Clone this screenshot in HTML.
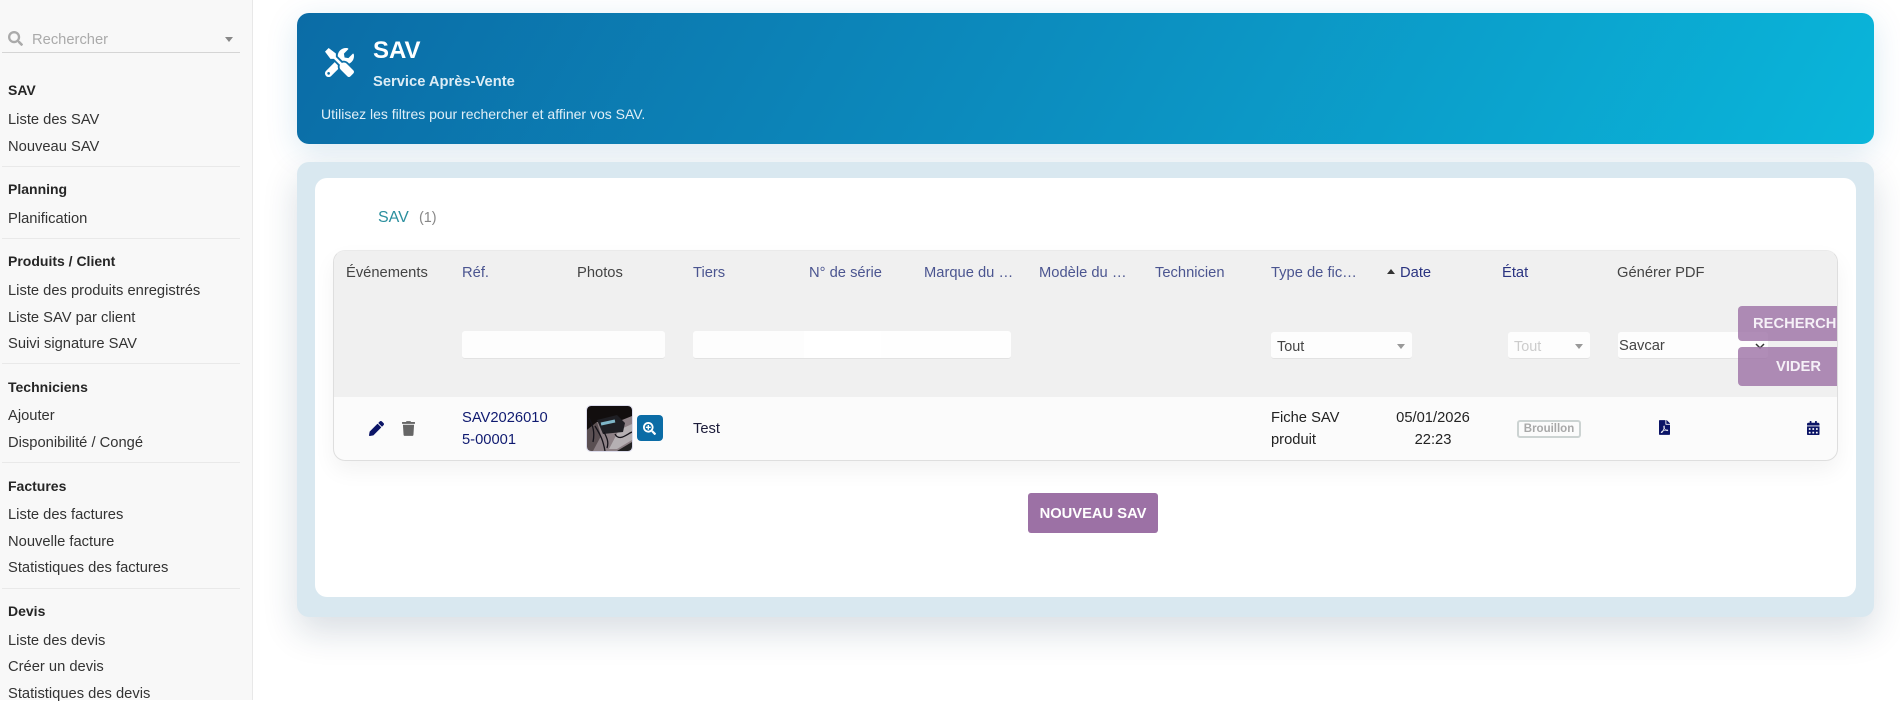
<!DOCTYPE html>
<html lang="fr"><head><meta charset="utf-8"><title>SAV</title>
<style>
*{box-sizing:border-box}
html,body{margin:0;padding:0;width:1900px;height:700px;overflow:hidden;background:#fff;font-family:"Liberation Sans",sans-serif;font-size:14.72px}
.a{position:absolute;white-space:nowrap;line-height:20px}
svg{position:absolute;display:block}
#side{position:absolute;left:0;top:0;width:253px;height:700px;background:#f8f8f8;border-right:1px solid #e8e8e8}
.h{font-weight:700;color:#262626;left:8px;font-size:14px}
.l{color:#333;left:8px}
.hr{position:absolute;left:2px;width:238px;height:1px;background:#e9e9e9}
#hero{position:absolute;left:297px;top:13px;width:1577px;height:131px;border-radius:12px;background:linear-gradient(120deg,#0b6ca6 0%,#0c8fc0 50%,#0ab6da 100%);box-shadow:0 8px 32px rgba(11,108,166,.15)}
#outer{position:absolute;left:297px;top:162px;width:1577px;height:455px;border-radius:12px;background:#d9e8f0;box-shadow:0 15px 35px rgba(20,50,80,.16)}
#inner{position:absolute;left:315px;top:178px;width:1541px;height:419px;border-radius:12px;background:#fff}
#tbl{position:absolute;left:333px;top:250px;width:1505px;height:211px;border-radius:12px;border:1px solid #dedede;border-top-color:#eaeaea;background:#fbfbfb;overflow:hidden}
#tshadow{position:absolute;left:333px;top:250px;width:1505px;height:211px;border-radius:12px;box-shadow:0 10px 22px rgba(0,0,0,.05)}
#thead{position:absolute;left:0;top:0;width:1505px;height:146px;background:#f0f0f0}
.th{top:263px;color:#4b5590}
.inp{position:absolute;background:#fdfdfd;border-bottom:1px solid #e2e2e2;border-radius:3px}
.car{position:absolute;width:0;height:0;border-left:4px solid transparent;border-right:4px solid transparent;border-top:5px solid #999}
.btn{position:absolute;left:1738px;width:99px;background:rgba(156,113,165,.8);border-radius:4px 0 0 4px;color:#f5f0f7;font-weight:700;overflow:hidden;white-space:nowrap}
.td{color:#1c1c3a}
</style></head><body>

<div id="side">
<svg style="left:8px;top:31px" width="15" height="15" viewBox="0 0 512 512"><path fill="#aaa" d="M505 442.7L405.3 343c-4.5-4.5-10.6-7-17-7H372c27.6-35.3 44-79.7 44-128C416 93.1 322.9 0 208 0S0 93.1 0 208s93.1 208 208 208c48.3 0 92.7-16.4 128-44v16.3c0 6.4 2.5 12.5 7 17l99.7 99.7c9.4 9.4 24.6 9.4 33.9 0l28.3-28.3c9.4-9.4 9.4-24.6.1-34zM208 336c-70.7 0-128-57.2-128-128 0-70.7 57.2-128 128-128 70.7 0 128 57.2 128 128 0 70.7-57.2 128-128 128z"/></svg>
<div class="a" style="left:32px;top:30px;color:#aaa">Rechercher</div>
<div class="car" style="left:225px;top:37px;border-top-color:#888"></div>
<div class="hr" style="top:52px;background:#d5d5d5"></div>
<div class="a h" style="top:80px">SAV</div>
<div class="a l" style="top:110px">Liste des SAV</div>
<div class="a l" style="top:137px">Nouveau SAV</div>
<div class="hr" style="top:166px"></div>
<div class="a h" style="top:179px">Planning</div>
<div class="a l" style="top:209px">Planification</div>
<div class="hr" style="top:238px"></div>
<div class="a h" style="top:251px">Produits / Client</div>
<div class="a l" style="top:281px">Liste des produits enregistrés</div>
<div class="a l" style="top:308px">Liste SAV par client</div>
<div class="a l" style="top:334px">Suivi signature SAV</div>
<div class="hr" style="top:363px"></div>
<div class="a h" style="top:377px">Techniciens</div>
<div class="a l" style="top:406px">Ajouter</div>
<div class="a l" style="top:433px">Disponibilité / Congé</div>
<div class="hr" style="top:462px"></div>
<div class="a h" style="top:476px">Factures</div>
<div class="a l" style="top:505px">Liste des factures</div>
<div class="a l" style="top:532px">Nouvelle facture</div>
<div class="a l" style="top:558px">Statistiques des factures</div>
<div class="hr" style="top:588px"></div>
<div class="a h" style="top:601px">Devis</div>
<div class="a l" style="top:631px">Liste des devis</div>
<div class="a l" style="top:657px">Créer un devis</div>
<div class="a l" style="top:684px">Statistiques des devis</div>
</div>

<div id="hero"></div>
<svg style="left:325px;top:48px" width="29" height="29" viewBox="0 0 512 512"><path fill="#fff" d="M501.1 395.7L384 278.6c-23.1-23.1-57.6-27.6-85.4-13.9L192 158.1V96L64 0 0 64l96 128h62.1l106.6 106.6c-13.6 27.8-9.2 62.3 13.9 85.4l117.1 117.1c14.6 14.6 38.2 14.6 52.7 0l52.7-52.7c14.5-14.6 14.5-38.2 0-52.7zM331.7 225c28.3 0 54.9 11 74.9 31l19.4 19.4c15.8-6.9 30.8-16.5 43.8-29.5 37.1-37.1 49.7-89.3 37.9-136.7-2.2-9-13.5-12.1-20.1-5.5l-74.4 74.4-67.9-11.3L334 98.9l74.4-74.4c6.6-6.6 3.4-17.9-5.7-20.2-47.4-11.7-99.6.9-136.6 37.9-28.5 28.5-41.9 66.1-41.2 103.6l82.1 82.1c8.1-1.9 16.5-2.9 24.7-2.9zm-103.9 82l-56.7-56.7L18.7 402.8c-25 25-25 65.5 0 90.5s65.5 25 90.5 0l123.6-123.6c-7.6-19.9-9.9-41.6-5-62.7zM64 472c-13.2 0-24-10.8-24-24 0-13.3 10.7-24 24-24s24 10.7 24 24c0 13.2-10.7 24-24 24z"/></svg>
<div class="a" style="left:373px;top:37px;font-size:24px;line-height:28px;font-weight:700;color:#fff">SAV</div>
<div class="a" style="left:373px;top:72px;font-weight:700;color:#dcecf5">Service Après-Vente</div>
<div class="a" style="left:321px;top:104px;font-size:14px;color:#e0eff7">Utilisez les filtres pour rechercher et affiner vos SAV.</div>

<div id="outer"></div>
<div id="inner"></div>
<div class="a" style="left:378px;top:208px;font-size:16px;color:#2b8f9e">SAV</div>
<div class="a" style="left:419px;top:208px;font-size:14.4px;color:#888">(1)</div>

<div id="tshadow"></div>
<div id="tbl"><div id="thead"></div></div>

<div class="a" style="left:346px;top:263px;color:#444">Événements</div>
<div class="a th" style="left:462px">Réf.</div>
<div class="a" style="left:577px;top:263px;color:#444">Photos</div>
<div class="a th" style="left:693px">Tiers</div>
<div class="a th" style="left:809px">N° de série</div>
<div class="a th" style="left:924px">Marque du …</div>
<div class="a th" style="left:1039px">Modèle du …</div>
<div class="a th" style="left:1155px">Technicien</div>
<div class="a th" style="left:1271px">Type de fic…</div>
<div style="position:absolute;left:1387px;top:269px;width:0;height:0;border-left:4.5px solid transparent;border-right:4.5px solid transparent;border-bottom:5px solid #333"></div>
<div class="a" style="left:1400px;top:263px;color:#2a3380">Date</div>
<div class="a" style="left:1502px;top:263px;color:#2a3380">État</div>
<div class="a" style="left:1617px;top:263px;color:#444">Générer PDF</div>

<div class="inp" style="left:462px;top:331px;width:203px;height:28px"></div>
<div class="inp" style="left:693px;top:331px;width:318px;height:28px;background:linear-gradient(90deg,#fdfdfd 0 111px,#fff 111px 188px,#fefefe 188px)"></div>
<div class="inp" style="left:1271px;top:332px;width:141px;height:27px"></div>
<div class="a" style="left:1277px;top:337px;font-size:14.4px;color:#444">Tout</div>
<div class="car" style="left:1397px;top:344px"></div>
<div class="inp" style="left:1508px;top:332px;width:82px;height:27px"></div>
<div class="a" style="left:1514px;top:337px;font-size:14.4px;color:#ccc">Tout</div>
<div class="car" style="left:1575px;top:344px"></div>
<div class="inp" style="left:1618px;top:332px;width:150px;height:27px"></div>
<div class="a" style="left:1619px;top:336px;color:#444">Savcar</div>
<svg style="left:1755px;top:343px" width="10" height="7" viewBox="0 0 10 7"><path d="M1 1l4 4 4-4" fill="none" stroke="#333" stroke-width="1.5"/></svg>
<div class="btn" style="top:306px;height:35px;line-height:37px;padding-left:15px">RECHERCHER</div>
<div class="btn" style="top:347px;height:39px;line-height:41px;padding-left:38px">VIDER</div>

<svg style="left:369px;top:421px" width="15" height="15" viewBox="0 0 512 512"><path fill="#0b1466" d="M497.9 142.1l-46.1 46.1c-4.7 4.7-12.3 4.7-17 0l-111-111c-4.7-4.7-4.7-12.3 0-17l46.1-46.1c18.7-18.7 49.1-18.7 67.9 0l60.1 60.1c18.8 18.7 18.8 49.1 0 67.9zM284.2 99.8L21.6 362.4.4 483.9c-2.9 16.4 11.4 30.6 27.8 27.8l121.5-21.3 262.6-262.6c4.7-4.7 4.7-12.3 0-17l-111-111c-4.8-4.7-12.4-4.7-17.1 0z"/></svg>
<svg style="left:402px;top:421px" width="13" height="15" viewBox="0 0 448 512"><path fill="#666" d="M432 32H312l-9.4-18.7A24 24 0 0 0 281.1 0H166.8a23.72 23.72 0 0 0-21.4 13.3L136 32H16A16 16 0 0 0 0 48v32a16 16 0 0 0 16 16h416a16 16 0 0 0 16-16V48a16 16 0 0 0-16-16zM53.2 467a48 48 0 0 0 47.9 45h245.8a48 48 0 0 0 47.9-45L416 128H32z"/></svg>
<div class="a" style="left:462px;top:407px;color:#0f1a70;line-height:22px;white-space:normal;width:90px">SAV2026010<br>5-00001</div>

<svg style="left:587px;top:406px;border-radius:4px;outline:1px solid #dcdcec" width="45" height="45" viewBox="0 0 45 45">
<rect width="45" height="45" fill="#8c8085"/>
<path d="M0 0H45V10L30 16 10 16 0 24Z" fill="#120e0e"/>
<path d="M0 24 L10 16 L14 30 L6 45 H0Z" fill="#5a4f52"/>
<path d="M32 24 L45 18 V34 L30 43 H22 Z" fill="#b5b0b3"/>
<path d="M10 14 L30 9 L38 17 L36 26 L16 28 Z" fill="#1f1f24"/>
<path d="M14 18 L28 15" stroke="#7fb6c8" stroke-width="3"/>
<path d="M8 20 C14 30 16 34 18 45 M17 26 C20 32 22 36 20 42 M28 28 C32 36 40 28 45 26 M2 12 C6 20 8 26 6 36" stroke="#15131a" stroke-width="1.3" fill="none"/>
<path d="M30 45 L45 36 V45 Z" fill="#222"/>
</svg>
<div style="position:absolute;left:637px;top:415px;width:26px;height:26px;border-radius:4px;background:#0b6ca6"></div>
<svg style="left:643px;top:422px" width="13" height="13" viewBox="0 0 512 512"><path fill="#fff" d="M304 192v32c0 6.6-5.4 12-12 12h-56v56c0 6.6-5.4 12-12 12h-32c-6.6 0-12-5.4-12-12v-56h-56c-6.6 0-12-5.4-12-12v-32c0-6.6 5.4-12 12-12h56v-56c0-6.6 5.4-12 12-12h32c6.6 0 12 5.4 12 12v56h56c6.6 0 12 5.4 12 12zm201 284.7L476.7 505c-9.4 9.4-24.6 9.4-33.9 0L343 405.3c-4.5-4.5-7-10.6-7-17V372c-35.3 27.6-79.7 44-128 44C93.1 416 0 322.9 0 208S93.1 0 208 0s208 93.1 208 208c0 48.3-16.4 92.7-44 128h16.3c6.4 0 12.5 2.5 17 7l99.7 99.7c9.3 9.4 9.3 24.6 0 34zM344 208c0-75.2-60.8-136-136-136S72 132.8 72 208s60.8 136 136 136 136-60.8 136-136z"/></svg>
<div class="a td" style="left:693px;top:419px">Test</div>
<div class="a" style="left:1271px;top:407px;color:#222;line-height:22px">Fiche SAV<br>produit</div>
<div class="a" style="left:1393px;width:80px;text-align:center;top:407px;color:#222;line-height:22px">05/01/2026<br>22:23</div>
<div style="position:absolute;left:1517px;top:420px;width:64px;height:18px;border:2px solid #ccd3d2;border-radius:3px;color:#a8a8a8;font-weight:700;font-size:11.5px;line-height:14px;text-align:center">Brouillon</div>
<svg style="left:1659px;top:420px" width="11" height="15" viewBox="0 0 384 512"><path fill="#0b1466" d="M181.9 256.1c-5-16-4.9-46.9-2-46.9 8.4 0 7.6 36.9 2 46.9zm-1.7 47.2c-7.7 20.2-17.3 43.3-28.4 62.7 18.3-7 39-17.2 62.9-21.9-12.7-9.6-24.9-23.4-34.5-40.8zM86.1 428.1c0 .8 13.2-5.4 34.9-40.2-6.7 6.3-29.1 24.5-34.9 40.2zM248 160h136v328c0 13.3-10.7 24-24 24H24c-13.3 0-24-10.7-24-24V24C0 10.7 10.7 0 24 0h200v136c0 13.2 10.8 24 24 24zm-8 171.8c-20-12.2-33.3-29-42.7-53.8 4.5-18.5 11.6-46.6 6.2-64.2-4.7-29.4-42.4-26.5-47.8-6.8-5 18.3-.4 44.1 8.1 77-11.6 27.6-28.7 64.6-40.8 85.8-.1 0-.1.1-.2.1-27.1 13.9-73.6 44.5-54.5 68 5.6 6.9 16 10 21.5 10 17.9 0 35.7-18 61.1-61.8 25.8-8.5 54.1-19.1 79-23.2 21.7 11.8 47.1 19.5 64 19.5 29.2 0 31.2-32 19.7-43.4-13.9-13.6-54.3-9.7-73.6-7.2zM377 105L279 7c-4.5-4.5-10.6-7-17-7h-6v128h128v-6.1c0-6.3-2.5-12.4-7-16.9zm-74.1 255.3c4.1-2.7-2.5-11.9-42.8-9 37.1 15.8 42.8 9 42.8 9z"/></svg>
<svg style="left:1807px;top:421px" width="12.5" height="14.3" viewBox="0 0 448 512"><path fill="#0b1466" d="M0 464c0 26.5 21.5 48 48 48h352c26.5 0 48-21.5 48-48V192H0v272zm320-196c0-6.6 5.4-12 12-12h40c6.6 0 12 5.4 12 12v40c0 6.6-5.4 12-12 12h-40c-6.6 0-12-5.4-12-12v-40zm0 128c0-6.6 5.4-12 12-12h40c6.6 0 12 5.4 12 12v40c0 6.6-5.4 12-12 12h-40c-6.6 0-12-5.4-12-12v-40zM192 268c0-6.6 5.4-12 12-12h40c6.6 0 12 5.4 12 12v40c0 6.6-5.4 12-12 12h-40c-6.6 0-12-5.4-12-12v-40zm0 128c0-6.6 5.4-12 12-12h40c6.6 0 12 5.4 12 12v40c0 6.6-5.4 12-12 12h-40c-6.6 0-12-5.4-12-12v-40zM64 268c0-6.6 5.4-12 12-12h40c6.6 0 12 5.4 12 12v40c0 6.6-5.4 12-12 12H76c-6.6 0-12-5.4-12-12v-40zm0 128c0-6.6 5.4-12 12-12h40c6.6 0 12 5.4 12 12v40c0 6.6-5.4 12-12 12H76c-6.6 0-12-5.4-12-12v-40zM400 64h-48V16c0-8.8-7.2-16-16-16h-32c-8.8 0-16 7.2-16 16v48H160V16c0-8.8-7.2-16-16-16h-32c-8.8 0-16 7.2-16 16v48H48C21.5 64 0 85.5 0 112v48h448v-48c0-26.5-21.5-48-48-48z"/></svg>

<div style="position:absolute;left:1028px;top:493px;width:130px;height:40px;border-radius:3px;background:#9c71a5;color:#fff;font-weight:700;text-align:center;line-height:42px">NOUVEAU SAV</div>

</body></html>
